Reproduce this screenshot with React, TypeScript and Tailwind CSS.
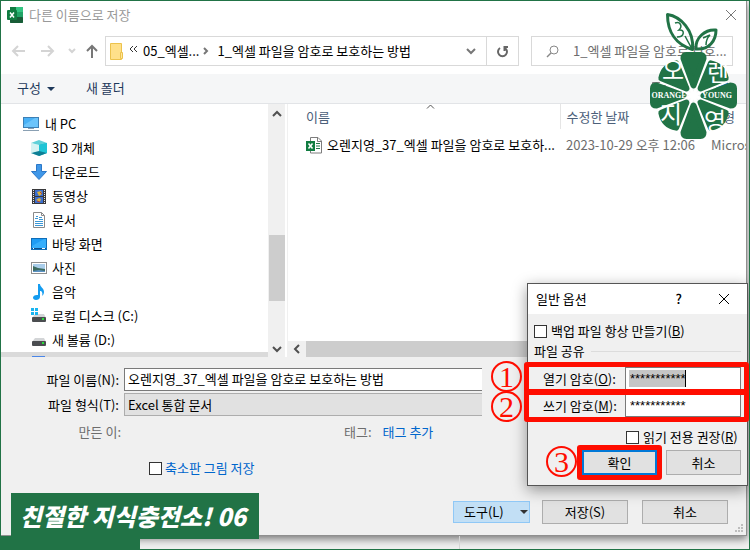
import React from "react";

const XlsIcon = () => (
  <svg width="16" height="16" viewBox="0 0 16 16" className="shrink-0">
    <rect x="3" y="0" width="13" height="16" rx="1" fill="#21a366" />
    <rect x="3" y="0" width="6" height="5" fill="#107c41" />
    <rect x="9" y="0" width="7" height="5" fill="#33c481" />
    <rect x="3" y="10" width="13" height="6" rx="1" fill="#185c37" />
    <rect x="0" y="3" width="10" height="10" rx="1" fill="#107c41" />
    <path d="M3 5.5l4 5M7 5.5l-4 5" stroke="#fff" strokeWidth="1.5" />
  </svg>
);

const XlsFileIcon = () => (
  <svg width="16" height="17" viewBox="0 0 16 17" className="shrink-0">
    <path d="M4.500 .5h7.500l3.500 3.500v12h-11z" fill="#fff" stroke="#7d7d7d" />
    <path d="M11.500 .5v4h4" fill="none" stroke="#7d7d7d" />
    <path d="M10 6.500h4M10 9h4M10 11.500h4" stroke="#21754a" />
    <rect x="0" y="4" width="9" height="10" fill="#107c41" />
    <path d="M2.500 6.500l4 5M6.500 6.500l-4 5" stroke="#fff" strokeWidth="1.5" />
  </svg>
);

const Svg = ({ children }: { children: React.ReactNode }) => (
  <svg width="16" height="16" viewBox="0 0 16 16" className="shrink-0">
    {children}
  </svg>
);

const Drive = ({ win }: { win?: boolean }) => (
  <Svg>
    <path d="M4 6h9l2 4H1z" fill="#d3d5d7" />
    {win && <path d="M0 0h3v3H0zM4 0h3v3H4zM0 4h3v3H0zM4 4h3v3H4z" fill="#19b5f1" />}
    <rect x="1" y="9" width="14" height="5" rx="1" fill="#4b4d50" />
    <rect x="11" y="10" width="2" height="2" fill="#28e03a" />
  </Svg>
);

const places = [
  {
    label: "3D 개체",
    icon: (
      <Svg>
        <path d="M0 3l8-3 8 3-8 3z" fill="#5fd0d8" />
        <path d="M0 3l8 2v11l-8-3z" fill="#a9e8ea" />
        <path d="M16 3L8 5v11l8-3z" fill="#12b0c4" />
        <path d="M8 10l8 3-8 3-8-3z" fill="#0d7f95" />
        <path d="M0 3l8 2v6l-8 2z" fill="#d5f3f3" />
        <path d="M16 3L8 5v6l8 2z" fill="#1fc4d6" />
      </Svg>
    ),
  },
  {
    label: "다운로드",
    icon: (
      <Svg>
        <path d="M5.500 .5h5v7h5L8 15.500.5 7.500h5z" fill="#3f97e8" stroke="#2c78c8" />
      </Svg>
    ),
  },
  {
    label: "동영상",
    icon: (
      <Svg>
        <rect x="1" y="1" width="14" height="15" fill="#39393b" />
        <rect x="4" y="2" width="8" height="6" fill="#3c6fce" />
        <rect x="4" y="9" width="8" height="6" fill="#3c6fce" />
        <path d="M6 4l4-1 1 3-3 2zM5 12l3-2 2 1-1 3z" fill="#d8b13c" />
        <path d="M9 4l2 2M6 13l3 1" stroke="#b4403c" />
        <path d="M2.500 2v14M13.500 2v14" stroke="#e8e8e8" strokeDasharray="1 1" />
      </Svg>
    ),
  },
  {
    label: "문서",
    icon: (
      <Svg>
        <path d="M2.500 .5h8l3 3v12h-11z" fill="#fff" stroke="#8a8a8a" />
        <path d="M10.500 .5v3h3" fill="none" stroke="#8a8a8a" />
        <path d="M4 6.500h3M8 5.500h3M8 7.500h4M4 9.500h8M4 11.500h8M4 13.500h8M5 4.500h2" stroke="#3b97d6" />
      </Svg>
    ),
  },
  {
    label: "바탕 화면",
    icon: (
      <Svg>
        <rect x=".5" y="2.500" width="15" height="11" fill="#1e9cf4" stroke="#0f6db8" />
        <path d="M1 10L13 3h2v9H1z" fill="#36aefb" />
        <path d="M1 12.500h14" stroke="#0c4f8c" />
        <path d="M2 12.500h1M11 12.500h3" stroke="#fff" />
      </Svg>
    ),
  },
  {
    label: "사진",
    icon: (
      <Svg>
        <rect x=".5" y="2.500" width="15" height="11" fill="#fff" stroke="#8f8f8f" />
        <rect x="2" y="4" width="12" height="8" fill="#a9cdea" />
        <path d="M2 6l5 2 7 1v3H2z" fill="#3d6b5f" />
        <path d="M2 11l6-1 6 1v1H2z" fill="#5d93c4" />
      </Svg>
    ),
  },
  {
    label: "음악",
    icon: (
      <Svg>
        <path
          d="M7 0h2c0 3 4 4 4 8 0 2-1 3-2 4 1-3 0-5-2-5v6c0 2-2 3-4 3s-3-1-3-2.500S4 10.500 7 11z"
          fill="#149cf0"
        />
      </Svg>
    ),
  },
  { label: "로컬 디스크 (C:)", icon: <Drive win /> },
  { label: "새 볼륨 (D:)", icon: <Drive /> },
];

const Chevron = ({ d, className = "" }: { d: string; className?: string }) => (
  <svg width="10" height="10" viewBox="0 0 10 10" className={className} fill="none" stroke="currentColor" strokeWidth="2">
    <path d={d} />
  </svg>
);
const UP = "M1 7l4-4 4 4";
const DOWN = "M1 3l4 4 4-4";
const LEFT = "M7 1L3 5l4 4";
const RIGHT = "M3 2l3 3-3 3";

const Mark = ({ n, className }: { n: number; className: string }) => (
  <span
    className={`absolute flex size-[31px] items-center justify-center rounded-full border-2 border-[#ff0d00] font-['Liberation_Serif',serif] text-[30px] leading-none text-[#ff0d00] ${className}`}
  >
    {n}
  </span>
);

const Frame = ({ className }: { className: string }) => (
  <div className={`pointer-events-none absolute rounded-[3px] border-[#ff0d00] ${className}`} />
);

const Logo = () => (
  <svg
    width="92"
    height="130"
    viewBox="648 11 92 130"
    className="absolute right-[9px] top-[10px]"
    aria-label="오렌지영"
  >
    <g fill="none" stroke="#217346" strokeWidth="3" strokeLinejoin="round">
      <path d="M667.500 14.500c13 2 27 16 25 35-17-5-25-18-25-35z" />
      <path d="M696 49c-1-11 9-20 20-19 0 11-7 20-20 19z" />
    </g>
    <g fill="none" stroke="#217346" strokeWidth="1.500">
      <path d="M675 23c5-2 8 3 4 7 6-1 6 7-2 7M685 36l7 13" />
      <path d="M703 38l7-3c-3 3-4 6-4 10" />
    </g>
    <g transform="translate(693.5 95.5)" fill="#fff" stroke="#fff" strokeWidth="3">
      {[22.5, 67.5, 112.5, 157.5].map((a) => (
        <path key={a} d="M0 -36V36" transform={`rotate(${a})`} />
      ))}
    </g>
    <g transform="translate(693.5 95.500)" fill="#217346" stroke="#217346" strokeLinejoin="round">
      {[0, 90, 180, 270].map((a) => (
        <path key={a} strokeWidth="6" d="M0 -10L-10 -37Q-10 -40.500 -7 -40.500H7Q10 -40.500 10 -37Z" transform={`rotate(${a})`} />
      ))}
      {[45, 135, 225, 315].map((a) => (
        <path key={a} strokeWidth="6" d="M0 -10L-10.500 -35Q0 -42 10.500 -35Z" transform={`rotate(${a})`} />
      ))}
    </g>
    <g fill="#fff" fontFamily="'Noto Sans CJK KR', sans-serif" fontSize="24" textAnchor="middle">
      <text x="673" y="79">오</text>
      <text x="718" y="81">렌</text>
      <text x="671" y="123">지</text>
      <text x="715" y="130">영</text>
    </g>
    <g fill="#fff" fontFamily="'Liberation Serif', serif" fontWeight="bold" fontSize="8" textAnchor="middle">
      <text x="669" y="98">ORANGE</text>
      <text x="717" y="98">YOUNG</text>
    </g>
    <circle cx="693.500" cy="95.500" r="4" fill="#fff" />
  </svg>
);

const Field = ({ id, label, k, selected }: { id: string; label: string; k: string; selected?: boolean }) => (
  <>
    <label htmlFor={id} className="flex-1 pl-[9px]">
      {label}(<u>{k}</u>):
    </label>
    <div className="relative h-[23px] w-[116px] border border-[#7a7a7a] bg-white">
      {selected && <span className="absolute left-[3px] top-[2px] h-[17px] w-[57px] border-r border-black bg-[#c5c5c5]" />}
      <input
        id={id}
        defaultValue="***********"
        className="relative block h-full w-full bg-transparent px-1 font-['Liberation_Sans',sans-serif] text-[13px] outline-none"
      />
    </div>
  </>
);

export default function App() {
  return (
    <div className="relative flex h-screen flex-col overflow-hidden border border-[#217346] bg-[#f0f0f0] font-['Noto_Sans_CJK_KR',sans-serif] text-[13px] leading-5 text-black">
      <div className="mr-[2px] flex min-h-0 flex-1 flex-col border-b border-r border-[#8f8f8f] bg-[#f0f0f0] shadow-[0_3px_8px_rgba(0,0,0,0.5)]">
        <header className="flex h-[35px] shrink-0 items-center bg-white pb-[7px] pl-[6px] pr-[9px]">
          <XlsIcon />
          <h1 className="ml-[6px] flex-1 text-[#999]">다른 이름으로 저장</h1>
          <button aria-label="닫기" className="text-[#777]">
            <svg width="12" height="12" viewBox="0 0 12 12" stroke="currentColor">
              <path d="M1 1l10 10M11 1L1 11" />
            </svg>
          </button>
        </header>

        <nav className="flex h-[38px] shrink-0 bg-white pb-2 pl-[10px] pr-[13px]">
          <div className="flex w-[94px] items-center justify-between pr-[6px] text-[#d4d4d4]">
            <button aria-label="뒤로">
              <svg width="14" height="14" viewBox="0 0 14 14" fill="none" stroke="currentColor" strokeWidth="2">
                <path d="M14 7H2M7 2L2 7l5 5" />
              </svg>
            </button>
            <button aria-label="앞으로" className="ml-2">
              <svg width="14" height="14" viewBox="0 0 14 14" fill="none" stroke="currentColor" strokeWidth="2">
                <path d="M0 7h12M7 2l5 5-5 5" />
              </svg>
            </button>
            <button aria-label="최근 위치" className="ml-1">
              <Chevron d="M2 3l3 3 3-3" />
            </button>
            <button aria-label="위로" className="text-[#777]">
              <svg width="14" height="14" viewBox="0 0 14 14" fill="none" stroke="currentColor" strokeWidth="2">
                <path d="M7 14V2M2 7l5-5 5 5" />
              </svg>
            </button>
          </div>
          <div className="flex flex-1 items-center border border-[#d9d9d9] pl-1">
            <svg width="14" height="17" viewBox="0 0 14 17">
              <path d="M.5.5h11v16H.5z" fill="#ffe08a" stroke="#ecc24c" />
              <path d="M10.500 9.500h2v6h-2z" fill="#ffe69c" stroke="#ecc24c" />
            </svg>
            <svg width="9" height="8" viewBox="0 0 9 8" className="mb-1 ml-[5px]" fill="none" stroke="#333">
              <path d="M4 1L1 4l3 3M8 1L5 4l3 3" />
            </svg>
            <span className="ml-[5px]">05_엑셀...</span>
            <Chevron d={RIGHT} className="ml-[2px] text-[#777]" />
            <span className="ml-[6px] flex-1 whitespace-nowrap">1_엑셀 파일을 암호로 보호하는 방법</span>
            <button aria-label="이전 위치" className="mr-[10px] text-[#777]">
              <Chevron d={DOWN} />
            </button>
            <button aria-label="새로 고침" className="flex h-full w-8 items-center justify-center border-l border-[#d9d9d9] text-[#666]">
              <svg width="13" height="13" viewBox="0 0 13 13" fill="none" stroke="currentColor" strokeWidth="2">
                <path d="M4 3a4.500 4.500 0 1 0 5 0M12 2H8.500v4" />
              </svg>
            </button>
          </div>
          <div className="ml-3 flex w-[202px] items-center overflow-hidden border border-[#d9d9d9] pl-[14px]">
            <svg width="13" height="13" viewBox="0 0 13 13" fill="none" stroke="#888" className="shrink-0">
              <circle cx="8" cy="5" r="4" />
              <path d="M5 8l-4 4" strokeWidth="1.500" />
            </svg>
            <input
              aria-label="검색"
              defaultValue="1_엑셀 파일을 암호로 보호..."
              className="ml-[14px] w-full min-w-0 text-[#6d6d6d] outline-none"
            />
          </div>
        </nav>

        <div className="flex h-[30px] shrink-0 items-center border-b border-[#e2e4e7] bg-[#f5f6f7] pb-[2px] pl-4 pr-4 text-[#1e395b]">
          <button className="flex items-center">
            구성
            <svg width="8" height="4" viewBox="0 0 8 4" className="ml-[6px] mt-[2px]">
              <path d="M0 0h8L4 4z" fill="#1e395b" />
            </svg>
          </button>
          <button className="ml-[31px]">새 폴더</button>
          <button aria-label="보기" className="ml-auto">
            <svg width="14" height="12" viewBox="0 0 14 12" fill="none" stroke="#777">
              <path d="M.5.5h13v11H.5zM.5 3.500h13" />
            </svg>
          </button>
          <button aria-label="도움말" className="ml-[50px]">
            <svg width="14" height="14" viewBox="0 0 14 14">
              <circle cx="7" cy="7" r="7" fill="#0f6cc4" />
            </svg>
          </button>
        </div>

        <main className="flex h-[253px] shrink-0 bg-white">
          <aside className="flex w-[267px] shrink-0 flex-col justify-between">
            <ul className="pt-2">
              <li className="flex h-6 items-center pl-[22px]">
                <Svg>
                  <rect x=".5" y="1.500" width="15" height="10" fill="#49b1f6" stroke="#3c7fb5" />
                  <path d="M1 9l11-7h3v9H1z" fill="#6cc4fb" />
                  <path d="M5 12.500h6M0 14.500h16" stroke="#8aa0b3" />
                </Svg>
                <span className="ml-[6px]">내 PC</span>
              </li>
              {places.map((p) => (
                <li key={p.label} className="flex h-6 items-center pl-[30px]">
                  {p.icon}
                  <span className="ml-[5px]">{p.label}</span>
                </li>
              ))}
            </ul>
            <div className="flex h-[5px] items-end bg-[#dadada] pl-[31px]">
              <span className="h-px w-[13px] bg-[#4a86e8]" />
            </div>
          </aside>
          <div className="flex w-[17px] flex-col items-center bg-[#f0f0f0] text-[#505050]">
            <Chevron d={UP} className="my-[5px]" />
            <div className="mt-[111px] h-[66px] w-4 bg-[#cdcdcd]" />
            <Chevron d={DOWN} className="mb-[3px] mt-auto" />
          </div>
          <section className="ml-[2px] flex min-w-0 flex-1 flex-col border-l border-[#f0f0f0]">
            <table className="w-full table-fixed border-collapse text-left">
              <thead>
                <tr className="h-[25px] text-[#4c607a]">
                  <th className="relative w-[272px] border-r border-[#e5e5e5] pl-[18px] font-normal">
                    이름
                    <svg width="9" height="5" viewBox="0 0 9 5" className="absolute left-[138px] top-0" fill="none" stroke="#555">
                      <path d="M1 4.500l3.500-3.500L8 4.500" />
                    </svg>
                  </th>
                  <th className="w-[151px] pl-[6px] font-normal">수정한 날짜</th>
                  <th className="whitespace-nowrap font-normal">유형</th>
                </tr>
              </thead>
              <tbody>
                <tr className="h-8 text-[#6d6d6d]">
                  <td className="pl-[18px] text-black">
                    <span className="flex items-center gap-[5px] whitespace-nowrap">
                      <XlsFileIcon />
                      오렌지영_37_엑셀 파일을 암호로 보호하...
                    </span>
                  </td>
                  <td className="whitespace-nowrap pl-[6px]">2023-10-29 오후 12:06</td>
                  <td className="overflow-hidden whitespace-nowrap">Microsoft</td>
                </tr>
              </tbody>
            </table>
            <div className="mt-auto flex h-4 items-center bg-[#f0f0f0] text-[#505050]">
              <Chevron d={LEFT} className="mx-[4px]" />
              <div className="h-full flex-1 bg-[#cdcdcd]" />
            </div>
          </section>
        </main>

        <form className="flex flex-1 flex-col pt-[11px]" onSubmit={(e) => e.preventDefault()}>
          <div className="mr-[264px] grid grid-cols-[118px_1fr] items-center gap-x-[5px] gap-y-[2px]">
            <label htmlFor="name" className="text-right">
              파일 이름(N):
            </label>
            <input
              id="name"
              defaultValue="오렌지영_37_엑셀 파일을 암호로 보호하는 방법"
              className="h-[23px] border border-r-0 border-[#7a7a7a] bg-white px-[3px] pb-[2px] outline-none"
            />
            <label htmlFor="type" className="text-right">
              파일 형식(T):
            </label>
            <select id="type" className="h-[23px] appearance-none border border-r-0 border-[#adadad] bg-[#e1e1e1] px-[3px] outline-none">
              <option>Excel 통합 문서</option>
            </select>
          </div>
          <div className="mt-[6px] flex items-center text-[#6d6d6d]">
            <span className="w-[120px] text-right">만든 이:</span>
            <span className="ml-[223px]">태그:</span>
            <a href="#" className="ml-[11px] text-[#0066cc]">
              태그 추가
            </a>
          </div>
          <label className="ml-[148px] mt-4 flex items-center gap-[3px] text-[#0066cc]">
            <input type="checkbox" className="size-[13px] appearance-none border border-[#333] bg-white" />
            축소판 그림 저장
          </label>
          <div className="mb-[11px] mr-[18px] mt-auto flex items-center justify-end">
            <button className="mr-3 flex h-[22px] w-[77px] items-center border border-[#90c8f6] bg-[#c2dff5] pl-[10px]">
              도구(L)
              <svg width="8" height="4" viewBox="0 0 8 4" className="ml-4">
                <path d="M0 0h8L4 4z" fill="#333" />
              </svg>
            </button>
            <button className="mr-[14px] h-6 w-[86px] border border-[#adadad] bg-[#e1e1e1]">저장(S)</button>
            <button className="h-6 w-[86px] border border-[#adadad] bg-[#e1e1e1]">취소</button>
          </div>
        </form>
      </div>
      <footer className="flex h-[13px] shrink-0">
        <div className="w-[139px] bg-[#217346]" />
        <div className="w-[320px] border-r border-[#d5d5d5]" />
      </footer>

      <svg width="9" height="9" viewBox="0 0 9 9" className="absolute bottom-[16px] right-[5px]" fill="#bdbdbd">
        <path d="M6 0h2v2H6zM3 3h2v2H3zM6 3h2v2H6zM0 6h2v2H0zM3 6h2v2H3zM6 6h2v2H6z" />
      </svg>

      <div className="absolute bottom-[10px] left-[10px] flex h-[46px] w-[248px] items-center justify-center whitespace-nowrap bg-[#217346] pr-1 text-2xl font-black italic text-white">
        친절한 지식충전소! 06
      </div>

      <Logo />

      <div
        role="dialog"
        aria-label="일반 옵션"
        className="absolute bottom-[63px] right-px w-[221px] border border-[#555] bg-[#f0f0f0] shadow-[0_4px_14px_rgba(0,0,0,0.4)]"
      >
        <div className="flex h-[30px] items-center bg-white pb-px pl-[8px] pr-[17px]">
          <h2 className="flex-1">일반 옵션</h2>
          <button aria-label="도움말" className="font-medium">
            ?
          </button>
          <button aria-label="닫기" className="ml-9">
            <svg width="12" height="12" viewBox="0 0 12 12" stroke="#000">
              <path d="M1 1l10 10M11 1L1 11" />
            </svg>
          </button>
        </div>
        <div className="flex flex-col px-[6px] pb-[10px] pt-[7px]">
          <label className="flex items-center gap-1">
            <input type="checkbox" className="size-[13px] appearance-none border border-[#333] bg-white" />
            <span>
              백업 파일 항상 만들기(<u>B</u>)
            </span>
          </label>
          <div className="flex items-center gap-[6px]">
            <span>파일 공유</span>
            <hr className="flex-1 border-[#dcdcdc]" />
          </div>
          <div className="relative mt-[6px] flex items-center">
            <Field id="open" label="열기 암호" k="O" selected />
            <Frame className="-bottom-[4px] -left-[10px] -right-[8px] -top-[5px] border-[5px]" />
            <Mark n={1} className="-left-[43px] -top-[6px]" />
          </div>
          <div className="relative mt-[4px] flex items-center">
            <Field id="write" label="쓰기 암호" k="M" />
            <Frame className="-bottom-[5px] -left-[10px] -right-[8px] -top-[4px] border-[5px]" />
            <Mark n={2} className="-left-[43px] -top-[3px]" />
          </div>
          <label className="ml-[92px] mt-[10px] flex items-center gap-1 whitespace-nowrap">
            <input type="checkbox" className="size-[13px] appearance-none border border-[#333] bg-white" />
            <span>
              읽기 전용 권장(<u>R</u>)
            </span>
          </label>
          <div className="mt-[3px] flex justify-end gap-[9px]">
            <div className="relative">
              <button className="block h-[25px] w-[75px] border-2 border-[#0078d7] bg-[#e1e1e1]">확인</button>
              <Frame className="-inset-[5px] border-[5px]" />
              <Mark n={3} className="-left-[36px] -top-[4px]" />
            </div>
            <button className="h-[25px] w-[75px] border border-[#adadad] bg-[#e1e1e1]">취소</button>
          </div>
        </div>
      </div>
    </div>
  );
}
